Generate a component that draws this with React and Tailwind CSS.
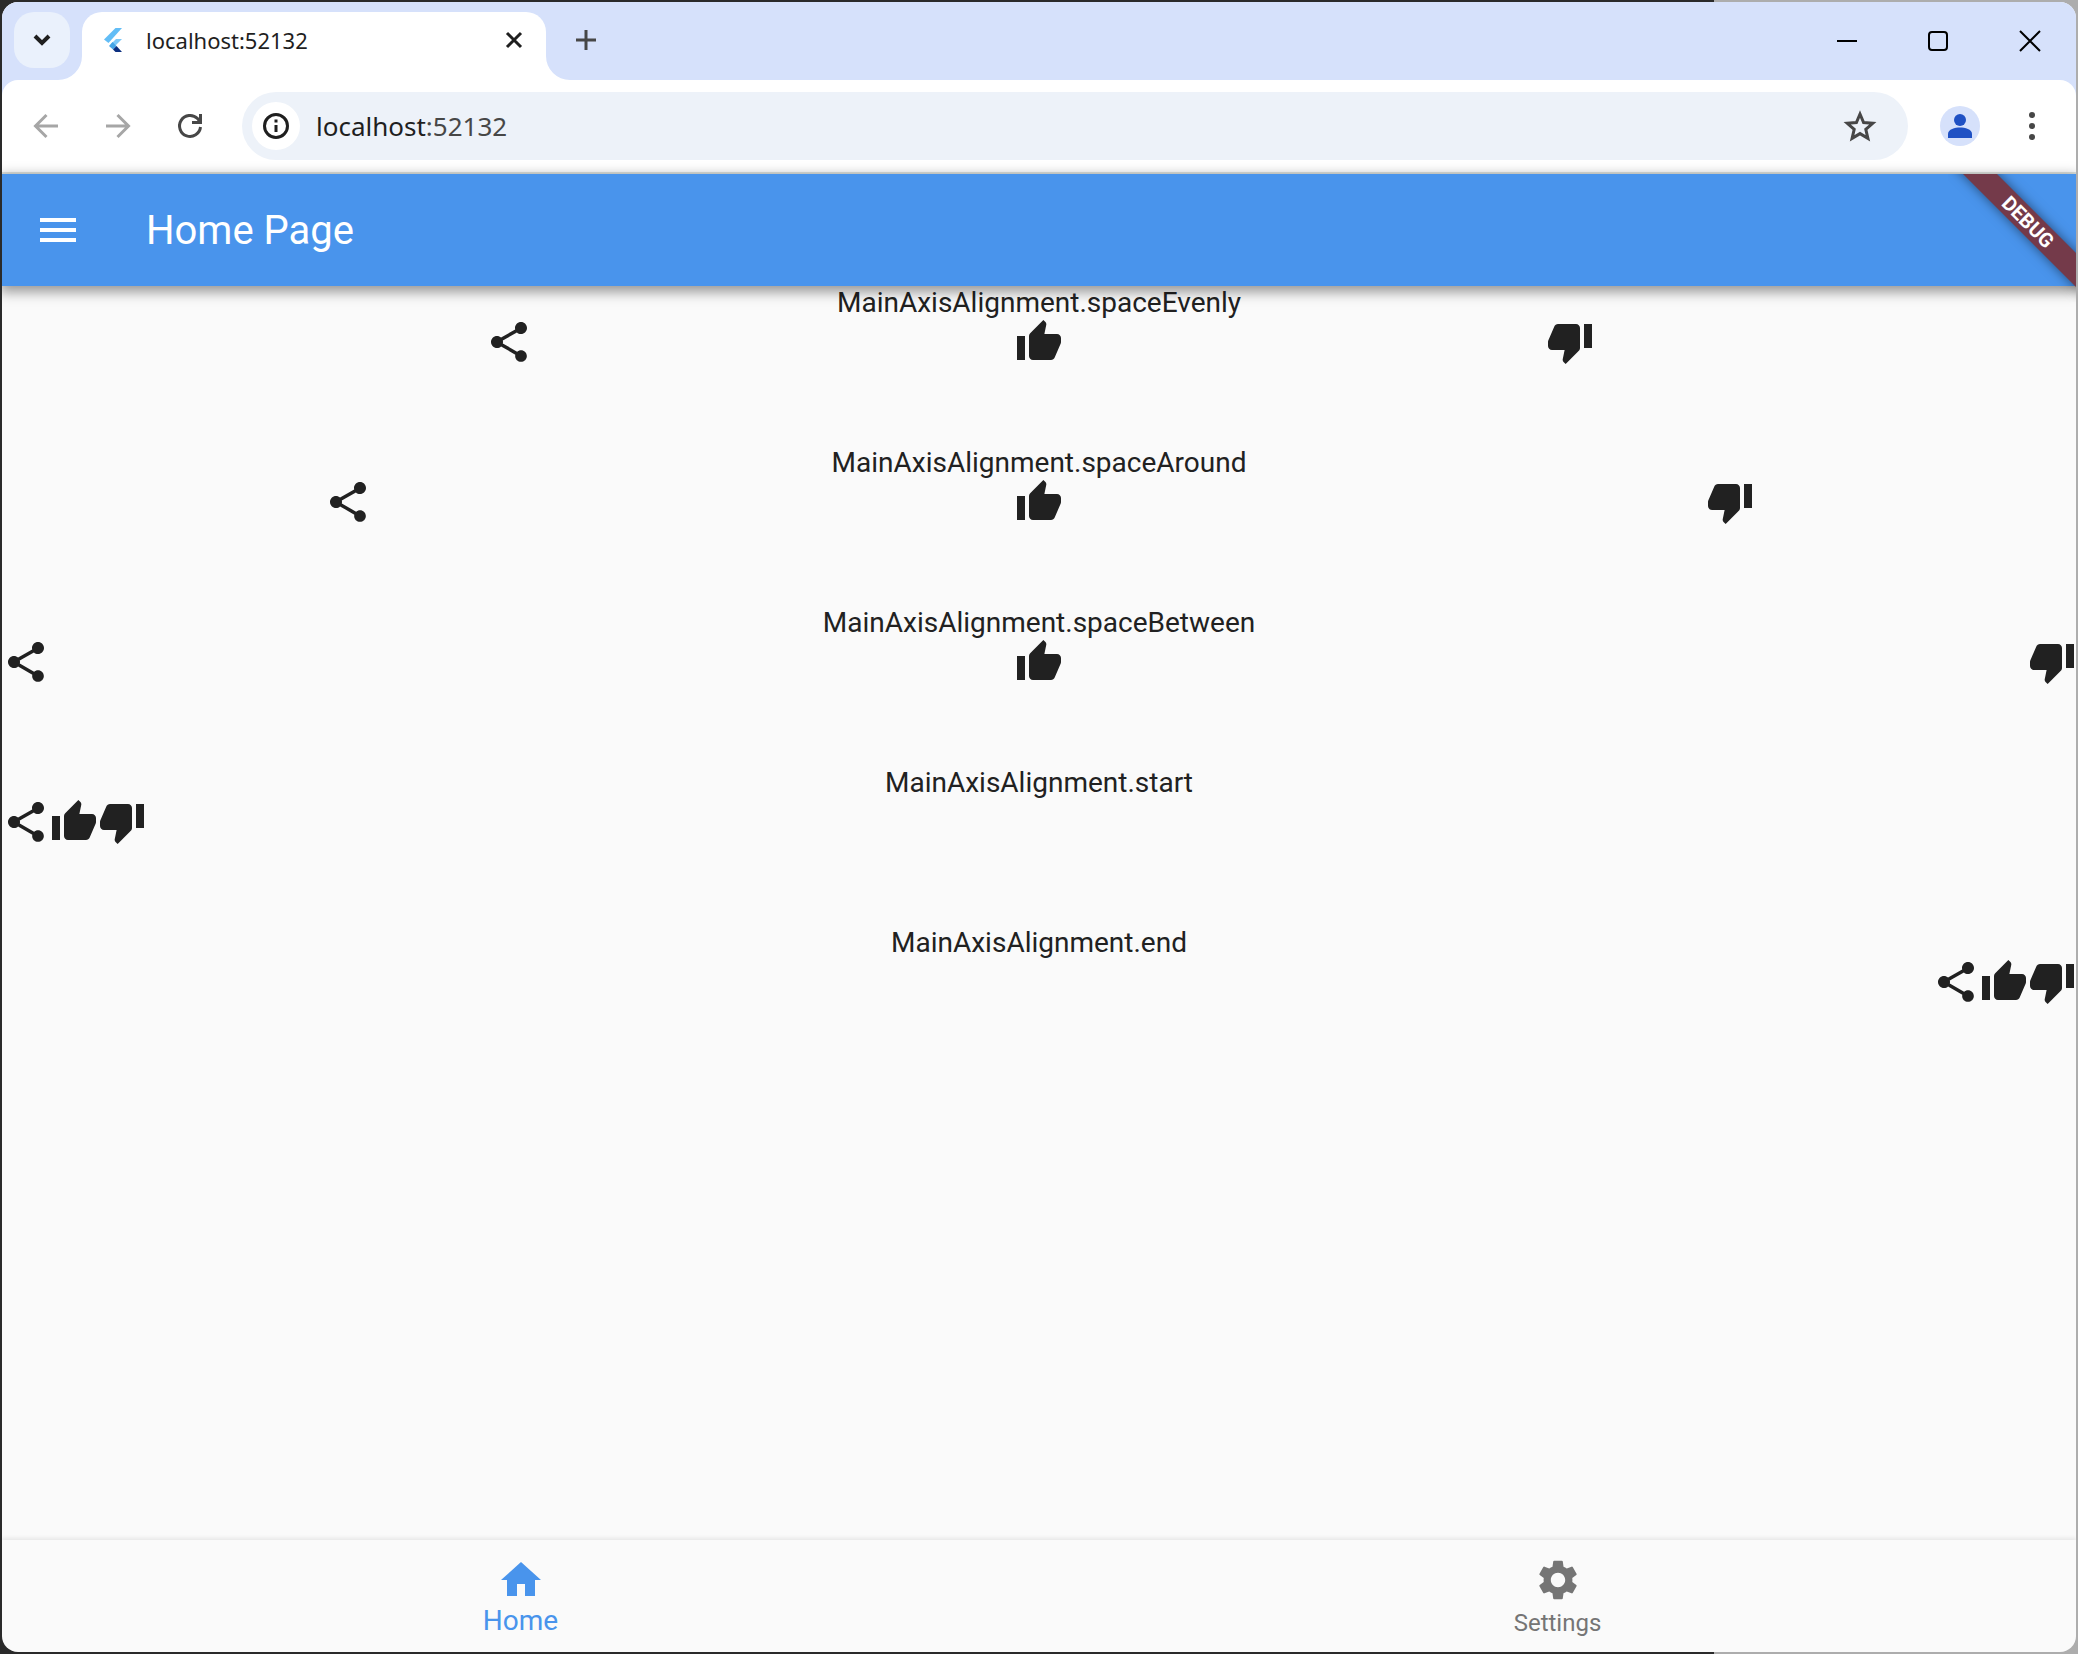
import React from "react";
import { MdShare, MdThumbUp, MdThumbDown, MdHome, MdSettings, MdMenu } from "react-icons/md";

const examples = [
  { label: "MainAxisAlignment.spaceEvenly", justify: "justify-evenly" },
  { label: "MainAxisAlignment.spaceAround", justify: "justify-around" },
  { label: "MainAxisAlignment.spaceBetween", justify: "justify-between" },
  { label: "MainAxisAlignment.start", justify: "justify-start" },
  { label: "MainAxisAlignment.end", justify: "justify-end" },
];

function FlutterLogo() {
  return (
    <svg className="size-8" viewBox="0 0 32 32" aria-hidden="true">
      <path d="M17.500 4H24L10.500 19 6 15.500z" fill="#62bdf6" />
      <path d="M18 15h6l-6 6-5.500-.5z" fill="#7cc8f8" />
      <path d="M14.500 18l4 4-3.500 3.500-4-3.500z" fill="#45a4e6" />
      <path d="M15 25.500l3.500-3.500L24 28h-6.500z" fill="#0c2f80" />
    </svg>
  );
}

function TabStrip() {
  return (
    <div className="flex h-[78px] items-end bg-[#d6e1fb] pl-3">
      <button aria-label="Search tabs" className="mb-3 flex size-14 shrink-0 items-center justify-center rounded-[20px] bg-[#eaf1fc]">
        <svg className="size-6" viewBox="0 0 24 24" fill="none" stroke="#1f1f1f" strokeWidth="4" aria-hidden="true">
          <path d="M5 8l7 7 7-7" />
        </svg>
      </button>
      <div className="-ml-3 flex items-end">
        <svg className="size-6" viewBox="0 0 24 24" aria-hidden="true">
          <path d="M24 0v24H0A24 24 0 0 0 24 0z" fill="#fff" />
        </svg>
        <div className="flex h-[68px] w-[464px] items-center rounded-t-[20px] bg-white px-4 pb-3">
          <FlutterLogo />
          <span className="ml-4 flex-1 font-['Noto_Sans'] text-[22px] leading-8 text-[#1f1f1f]">localhost:52132</span>
          <button aria-label="Close tab" className="flex size-8 items-center justify-center">
            <svg className="size-6" viewBox="0 0 24 24" stroke="#1f1f1f" strokeWidth="3" aria-hidden="true">
              <path d="M5 5l14 14M19 5L5 19" />
            </svg>
          </button>
        </div>
        <svg className="size-6" viewBox="0 0 24 24" aria-hidden="true">
          <path d="M0 0v24h24A24 24 0 0 1 0 0z" fill="#fff" />
        </svg>
      </div>
      <button aria-label="New tab" className="mb-6 flex size-8 items-center justify-center">
        <svg className="size-6" viewBox="0 0 24 24" stroke="#474747" strokeWidth="3" aria-hidden="true">
          <path d="M12 2v20M2 12h20" />
        </svg>
      </button>
      <div className="ml-auto flex self-stretch text-black">
        <button aria-label="Minimize" className="flex w-[92px] items-center justify-center">
          <svg className="size-6" viewBox="0 0 24 24" stroke="currentColor" strokeWidth="2" aria-hidden="true">
            <path d="M3 12h20" />
          </svg>
        </button>
        <button aria-label="Maximize" className="flex w-[92px] items-center justify-center">
          <svg className="size-6" viewBox="0 0 24 24" fill="none" stroke="currentColor" strokeWidth="2" aria-hidden="true">
            <rect x="3" y="3" width="18" height="18" rx="3" />
          </svg>
        </button>
        <button aria-label="Close" className="flex w-[92px] items-center justify-center">
          <svg className="size-6" viewBox="0 0 24 24" stroke="currentColor" strokeWidth="2" aria-hidden="true">
            <path d="M2 2l20 20M22 2L2 22" />
          </svg>
        </button>
      </div>
    </div>
  );
}

function Toolbar() {
  return (
    <div className="bg-[#d6e1fb]">
      <div className="flex h-[94px] items-center rounded-t-2xl border-b-2 border-[#e0e4e0] bg-white px-6">
        <div className="flex gap-8">
          <button aria-label="Back" className="flex size-10 items-center justify-center">
            <svg className="size-8" viewBox="0 0 32 32" fill="none" stroke="#a6a6a6" strokeWidth="3" aria-hidden="true">
              <path d="M28 16H6M16.500 5L5.500 16l11 11" />
            </svg>
          </button>
          <button aria-label="Forward" className="flex size-10 items-center justify-center">
            <svg className="size-8" viewBox="0 0 32 32" fill="none" stroke="#a6a6a6" strokeWidth="3" aria-hidden="true">
              <path d="M4 16h22M15.500 5l11 11-11 11" />
            </svg>
          </button>
          <button aria-label="Reload" className="flex size-10 items-center justify-center">
            <svg className="size-8" viewBox="0 0 32 32" fill="none" stroke="#474747" strokeWidth="3" aria-hidden="true">
              <path d="M26.500 17A10.500 10.500 0 1 1 23.500 8.500L26 11.500" />
              <path d="M26.500 4v8.500H18" />
            </svg>
          </button>
        </div>
        <div className="ml-8 flex h-[68px] flex-1 items-center rounded-full bg-[#edf2f9] px-[10px]">
          <button aria-label="View site information" className="flex size-12 items-center justify-center rounded-full bg-white">
            <svg className="size-8" viewBox="0 0 32 32" fill="none" stroke="#1f1f1f" strokeWidth="3" aria-hidden="true">
              <circle cx="16" cy="16" r="11.500" />
              <path d="M16 15v7M16 9.500v3" />
            </svg>
          </button>
          <div className="ml-4 flex-1 font-['Noto_Sans'] text-[26px] leading-10 text-[#1f1f1f]">
            localhost<span className="text-[#474747]">:52132</span>
          </div>
          <button aria-label="Bookmark this tab" className="mr-[18px] flex size-10 items-center justify-center">
            <svg className="size-10" viewBox="0 0 40 40" fill="none" stroke="#474747" strokeWidth="3" aria-hidden="true">
              <path d="M20 8l3.600 8.500 9.200.8-7 6.100 2.100 9L20 27.600l-7.900 4.800 2.100-9-7-6.100 9.200-.8z" />
            </svg>
          </button>
        </div>
        <button aria-label="Profile" className="ml-8 flex size-10 items-center justify-center rounded-full bg-[#d6e1fb]">
          <svg className="size-10" viewBox="0 0 40 40" fill="#1f51c4" aria-hidden="true">
            <circle cx="20" cy="14" r="6" />
            <path d="M8 32v-4c0-5 7-6.500 12-6.500S32 23 32 28v4z" />
          </svg>
        </button>
        <button aria-label="Menu" className="ml-8 flex size-10 items-center justify-center">
          <svg className="size-10" viewBox="0 0 40 40" fill="#474747" aria-hidden="true">
            <circle cx="20" cy="9" r="3" />
            <circle cx="20" cy="20" r="3" />
            <circle cx="20" cy="31" r="3" />
          </svg>
        </button>
      </div>
    </div>
  );
}

function AppBar() {
  return (
    <header className="relative flex h-28 items-center bg-[#4994ec] pl-8 text-white shadow-[0_4px_12px_2px_rgba(0,0,0,0.4)]">
      <button aria-label="Open navigation menu">
        <MdMenu className="size-12" />
      </button>
      <h1 className="ml-16 pt-0.5 text-[40px] font-normal leading-[48px]">Home Page</h1>
      <div className="pointer-events-none absolute right-0 top-0 size-32 overflow-hidden">
        <div className="absolute -right-[52px] top-9 flex h-6 w-[200px] rotate-45 items-center justify-center bg-[#743a4a] text-[20px] font-bold leading-6 shadow-[0_0_12px_rgba(0,0,0,0.5)]">
          DEBUG
        </div>
      </div>
    </header>
  );
}

export default function App() {
  return (
    <div className="flex min-h-screen flex-col bg-[linear-gradient(to_right,#2a2a2a_82.5%,#adadad_82.5%)] p-[2px]">
      <div className="flex flex-1 flex-col overflow-hidden rounded-2xl bg-[#fafafa] font-['Roboto',sans-serif]">
        <TabStrip />
        <Toolbar />
        <AppBar />
        <main className="flex-1 text-[#212121]">
          {examples.map((e) => (
            <section key={e.label} className="h-40">
              <p className="h-8 text-center text-[28px] leading-[34px]">{e.label}</p>
              <div className={"flex " + e.justify}>
                <MdShare className="size-12" />
                <MdThumbUp className="size-12" />
                <MdThumbDown className="size-12" />
              </div>
            </section>
          ))}
        </main>
        <nav className="flex h-28 shadow-[0_-2px_4px_rgba(0,0,0,0.08)]">
          <a href="#home" className="flex flex-1 flex-col items-center pt-4 text-[#4994ec]">
            <MdHome className="size-12" />
            <span className="text-[28px] leading-[34px]">Home</span>
          </a>
          <a href="#settings" className="flex flex-1 flex-col items-center pt-4 text-[#757575]">
            <MdSettings className="size-12" />
            <span className="text-[24px] leading-[38px]">Settings</span>
          </a>
        </nav>
      </div>
    </div>
  );
}
